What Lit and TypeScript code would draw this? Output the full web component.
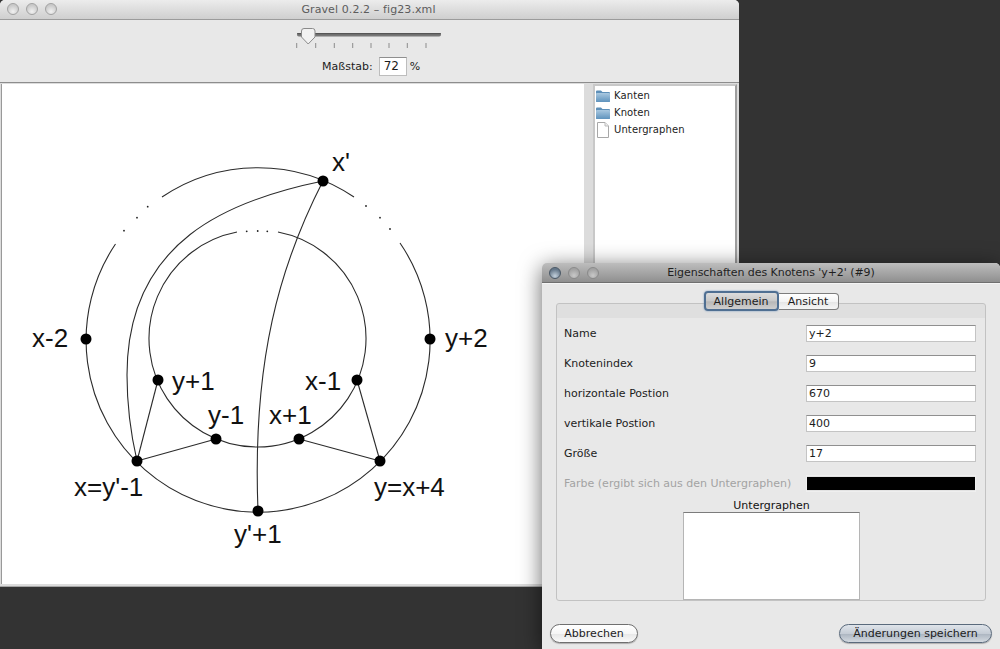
import { LitElement, html, css, svg } from "lit";
import { customElement } from "lit/decorators.js";

const nodes = [
  [323, 181], [86, 339], [430, 339], [158, 380], [357, 380],
  [216, 439], [299, 439], [137, 461], [380, 461], [258, 511],
];

const labels: [string, number, number][] = [
  ["x'", 332, 171],
  ["x-2", 32, 347],
  ["y+2", 445, 347],
  ["y+1", 172, 390],
  ["x-1", 305, 390],
  ["y-1", 208, 424],
  ["x+1", 269, 424],
  ["x=y'-1", 74, 496],
  ["y=x+4", 374, 496],
  ["y'+1", 234, 543],
];

const edges = [
  "M162 197 A172 172 0 0 1 354 197",
  "M115.5 244 A172 172 0 1 0 400 243",
  "M237 232 A108.5 108.5 0 1 0 278 232",
  "M323 181 C230 200 127 240 127 375 C127 405 131 435 137 461",
  "M323 181 C280 265 252 360 258 511",
  "M137 461 L158 380",
  "M137 461 L216 439",
  "M380 461 L357 380",
  "M380 461 L299 439",
];

const dots = [
  [147.7, 206.7], [137, 217.7], [124, 230.7],
  [366, 206], [380, 217.7], [390, 229],
  [246.7, 231.3], [257.7, 231], [267.3, 231.3],
];

const ticks = [296.7, 315.7, 334.3, 352.7, 371, 389, 407.3, 426];

const fields = [
  ["Name", "y+2"],
  ["Knotenindex", "9"],
  ["horizontale Postion", "670"],
  ["vertikale Postion", "400"],
  ["Größe", "17"],
];

const folderIcon = html`<svg class="tree-icon" width="16" height="14" viewBox="0 0 16 14">
  <defs>
    <linearGradient id="fld" x1="0" y1="0" x2="0" y2="1">
      <stop offset="0" stop-color="#a9c8e0" />
      <stop offset="1" stop-color="#5f93bd" />
    </linearGradient>
  </defs>
  <path d="M1 2.5 Q1 1.5 2 1.5 H6 L7.5 3 H14 Q15 3 15 4 V12 Q15 13 14 13 H2 Q1 13 1 12 Z" fill="#5d8fb8" />
  <rect x="1" y="4" width="14" height="9" rx="1" fill="url(#fld)" />
</svg>`;

const fileIcon = html`<svg class="tree-icon" width="16" height="16" viewBox="0 0 16 16">
  <path d="M2.5 .5 H10 L13.5 4 V15.5 H2.5 Z" fill="#fff" stroke="#a8a8a8" />
  <path d="M10 .5 V4 H13.5" fill="#eee" stroke="#bbb" />
</svg>`;

@customElement("app-root")
export class AppRoot extends LitElement {
  static styles = css`
    :host {
      display: block;
      font-family: "DejaVu Sans", sans-serif;
      font-size: 11px;
      color: #1c1c1c;
    }
    .desktop {
      position: relative;
      width: 1000px;
      height: 649px;
      overflow: hidden;
      background: #333333;
    }
    .window {
      position: absolute;
      display: flex;
      flex-direction: column;
      background: #e8e8e8;
      border-radius: 5px 5px 0 0;
    }
    .main {
      left: 0;
      top: 0;
      width: 739px;
      height: 587px;
    }
    .dialog {
      left: 542px;
      top: 263px;
      width: 458px;
      height: 386px;
      box-shadow: 0 4px 22px rgba(0, 0, 0, 0.6);
    }
    .titlebar {
      flex: none;
      display: flex;
      align-items: center;
      position: relative;
      height: 19px;
      border-bottom: 1px solid #9b9b9b;
      border-radius: 5px 5px 0 0;
      background: linear-gradient(#ececec, #cfcfcf);
      color: #5c5c5c;
      justify-content: center;
      letter-spacing: 0.1px;
      padding-right: 2px;
    }
    .dialog .titlebar {
      height: 19px;
      padding-right: 0;
      letter-spacing: -0.06px;
      background: linear-gradient(#bdbdbd, #8f8f8f);
      color: #1f1f1f;
      border-bottom: 1px solid #6f6f6f;
      box-shadow: 0 1px 0 #f4f4f4;
    }
    .lights {
      position: absolute;
      left: 7px;
      top: 3px;
      display: flex;
      gap: 7px;
    }
    .dialog .lights {
      left: 7px;
      top: 4px;
    }
    .light {
      width: 12px;
      height: 12px;
      border-radius: 50%;
      box-sizing: border-box;
      border: 1px solid #a2a2a2;
      background: radial-gradient(circle at 50% 75%, #f1f1f1, #c9c9c9 70%);
    }
    .dialog .light {
      border-color: #8a8a8a;
      background: radial-gradient(circle at 50% 75%, #c8c8c8, #a2a2a2 70%);
    }
    .dialog .light.close {
      border-color: #4a5866;
      background: radial-gradient(circle at 50% 80%, #c3d0dc, #66788a 70%);
    }
    .toolbar {
      flex: none;
      height: 62px;
      box-sizing: border-box;
      display: flex;
      flex-direction: column;
      align-items: flex-start;
      padding-left: 292px;
    }
    .slider {
      display: block;
      margin-top: 8px;
    }
    .scale {
      display: flex;
      align-items: center;
      margin: 7px 0 0 30px;
    }
    .scale-input {
      box-sizing: border-box;
      width: 28px;
      height: 19px;
      margin: 0 3px 0 6px;
      padding: 1px 4px;
      background: #fff;
      border: 1px solid #bdbdbd;
      border-top-color: #8f8f8f;
      line-height: 15px;
      font-size: 12px;
    }
    .content {
      flex: 1;
      display: flex;
      border-top: 1px solid #8d8d8d;
      border-bottom: 1px solid #a5a5a5;
      padding: 1px 2px 2px 2px;
      background: #dcdcdc;
      min-height: 0;
    }
    .canvas {
      width: 582px;
      background: #fff;
      box-shadow: -1px 0 0 #999;
    }
    .canvas svg {
      display: block;
    }
    .canvas text {
      font-family: "Liberation Sans", Arial, sans-serif;
      font-size: 26px;
      fill: #111;
    }
    .tree {
      margin-left: 9px;
      width: 144px;
      box-sizing: border-box;
      background: #fff;
      border: 2px solid #c8c8c8;
      border-right-color: #9e9e9e;
      padding-top: 1px;
      font-size: 10px;
      letter-spacing: 0.1px;
    }
    .tree-row {
      display: flex;
      align-items: center;
      height: 17px;
      gap: 3px;
    }
    .tree-icon {
      flex: none;
    }
    .tabs {
      position: relative;
      z-index: 1;
      flex: none;
      display: flex;
      justify-content: center;
      height: 20px;
      margin: 8px 0 -8px 0;
    }
    .tab {
      box-sizing: border-box;
      display: flex;
      align-items: center;
      justify-content: center;
      border: 1px solid #7d7d7d;
      background: linear-gradient(#ffffff, #f4f4f4 50%, #e6e6e6 55%, #f6f6f6);
    }
    .tab.active {
      width: 75px;
      height: 20px;
      border: 2px solid #4f6f92;
      border-radius: 4px;
      background: linear-gradient(#dcdcdc, #c8c8c8 50%, #b8b8b8 55%, #cfcfcf);
      box-shadow: 0 0 2px #6f94bd;
    }
    .tab.other {
      width: 60px;
      height: 17px;
      margin-top: 2px;
      border-left: none;
      border-radius: 0 4px 4px 0;
    }
    .group {
      flex: none;
      box-sizing: border-box;
      height: 298px;
      margin: 0 14px;
      border: 1px solid #c2c2c2;
      border-radius: 3px;
      padding: 14px 9px 0 7px;
      background: linear-gradient(#dfdfdf, #dfdfdf 14px, #e8e8e8 14px);
      display: flex;
      flex-direction: column;
    }
    .fields {
      display: grid;
      grid-template-columns: 1fr 170px;
      grid-auto-rows: 17px;
      row-gap: 13px;
      margin-top: 7px;
      align-items: center;
    }
    .field-input {
      box-sizing: border-box;
      height: 17px;
      padding: 0 2px;
      line-height: 15px;
      background: #fff;
      border: 1px solid #c4c4c4;
      border-top-color: #8f8f8f;
    }
    .disabled {
      color: #a3a3a3;
    }
    .swatch {
      box-sizing: border-box;
      height: 17px;
      background: #000;
      border: 1px solid #e2e2e2;
      border-width: 2px 1px;
      outline: 1px solid #efefef;
      outline-offset: -1px;
    }
    .sub {
      text-align: center;
      margin: 8px 0 0 3px;
      line-height: 12px;
      color: #111;
    }
    .sublist {
      box-sizing: border-box;
      align-self: center;
      width: 177px;
      height: 88px;
      margin-left: 2px;
      background: #fff;
      border: 1px solid #b5b5b5;
      border-top-color: #7c7c7c;
    }
    .footer {
      flex: none;
      display: flex;
      justify-content: space-between;
      padding: 23px 8px 0 8px;
    }
    .btn {
      box-sizing: border-box;
      height: 19px;
      display: flex;
      align-items: center;
      justify-content: center;
      border: 1px solid #6f6f6f;
      border-radius: 10px;
      background: linear-gradient(#ffffff, #f6f6f6 50%, #e8e8e8 55%, #fafafa);
      box-shadow: 0 1px 1px rgba(0, 0, 0, 0.25);
    }
    .btn.cancel {
      width: 88px;
    }
    .btn.save {
      width: 153px;
      border-color: #5a6a7c;
      background: linear-gradient(#dfe4ea, #c5ccd5 50%, #aeb7c2 55%, #d3d9e0);
    }
  `;

  private renderGraph() {
    // graph is drawn in page coordinates, the viewBox shifts it into the canvas
    return html`<svg width="582" height="500" viewBox="2 84 582 500">
      ${edges.map((d) => svg`<path d=${d} fill="none" stroke="#2b2b2b" stroke-width="1.1" />`)}
      ${dots.map(([x, y]) => svg`<circle cx=${x} cy=${y} r="0.9" fill="#222" />`)}
      ${nodes.map(([x, y]) => svg`<circle cx=${x} cy=${y} r="5.5" fill="#000" />`)}
      ${labels.map(([t, x, y]) => svg`<text x=${x} y=${y}>${t}</text>`)}
    </svg>`;
  }

  private renderSlider() {
    return html`<svg class="slider" width="152" height="22" viewBox="292 28 152 22">
      <rect x="297" y="33" width="144" height="3.6" rx="1.8" fill="#777" />
      <rect x="297" y="33" width="144" height="1.2" rx="0.6" fill="#555" />
      ${ticks.map((x) => svg`<rect x=${x - 0.5} y="43" width="1" height="5" fill="#8c8c8c" />`)}
      <path d="M301.5 31 Q301.5 28.5 304 28.5 H312.5 Q315 28.5 315 31 V37 L308.2 44 L301.5 37 Z"
        fill="#f2f2f2" stroke="#8a8a8a" />
    </svg>`;
  }

  render() {
    return html`<div class="desktop">
      <div class="window main">
        <div class="titlebar">
          <div class="lights">
            <span class="light"></span><span class="light"></span><span class="light"></span>
          </div>
          Gravel 0.2.2 – fig23.xml
        </div>
        <div class="toolbar">
          ${this.renderSlider()}
          <div class="scale">
            <span>Maßstab:</span>
            <span class="scale-input">72</span>
            <span>%</span>
          </div>
        </div>
        <div class="content">
          <div class="canvas">${this.renderGraph()}</div>
          <div class="tree">
            <div class="tree-row">${folderIcon}Kanten</div>
            <div class="tree-row">${folderIcon}Knoten</div>
            <div class="tree-row">${fileIcon}Untergraphen</div>
          </div>
        </div>
      </div>

      <div class="window dialog">
        <div class="titlebar">
          <div class="lights">
            <span class="light close"></span><span class="light"></span><span class="light"></span>
          </div>
          Eigenschaften des Knotens 'y+2' (#9)
        </div>
        <div class="tabs">
          <div class="tab active">Allgemein</div>
          <div class="tab other">Ansicht</div>
        </div>
        <div class="group">
          <div class="fields">
            ${fields.map(
              ([label, value]) => html`
                <div>${label}</div>
                <div class="field-input">${value}</div>
              `
            )}
            <div class="disabled">Farbe (ergibt sich aus den Untergraphen)</div>
            <div class="swatch"></div>
          </div>
          <div class="sub">Untergraphen</div>
          <div class="sublist"></div>
        </div>
        <div class="footer">
          <div class="btn cancel">Abbrechen</div>
          <div class="btn save">Änderungen speichern</div>
        </div>
      </div>
    </div>`;
  }
}
